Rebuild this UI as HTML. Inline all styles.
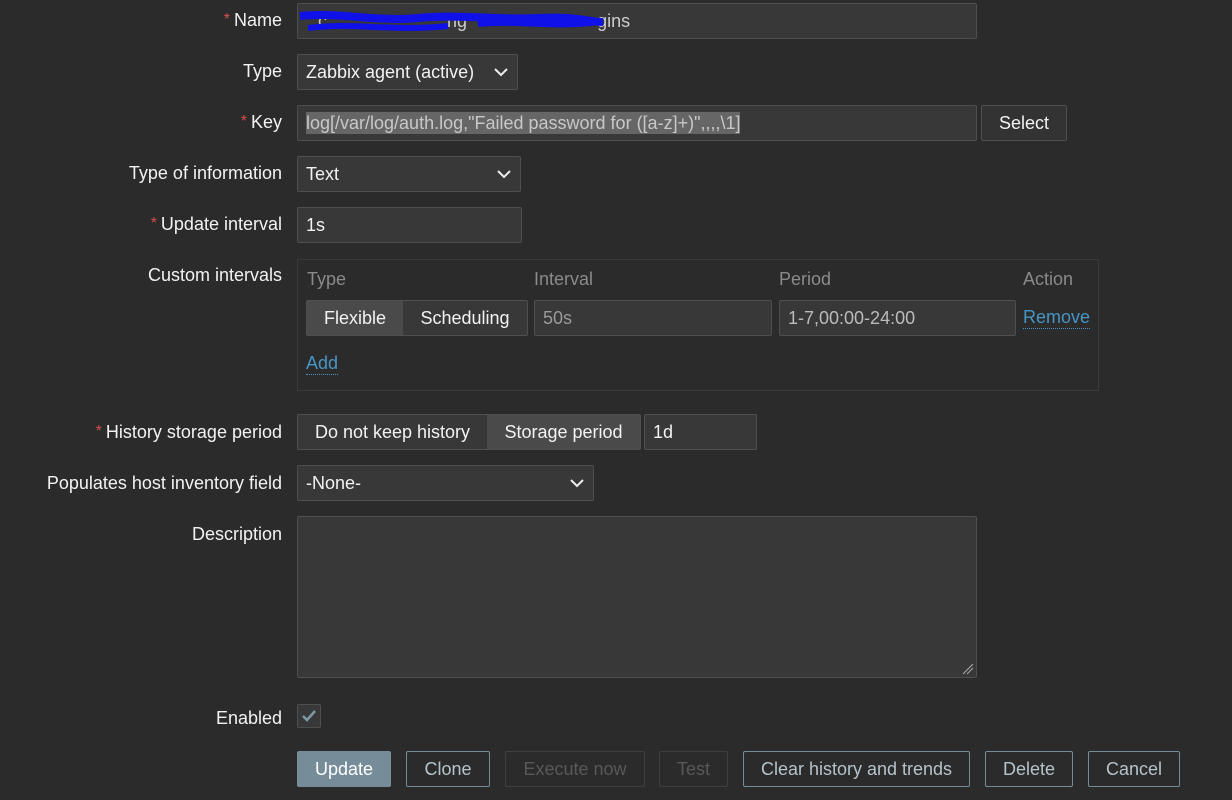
<!DOCTYPE html>
<html><head><style>
*{box-sizing:border-box;margin:0;padding:0}
body{width:1232px;height:800px;background:#2b2b2b;font-family:"Liberation Sans",Arial,sans-serif;font-size:18px;color:#f2f2f2;position:relative;overflow:hidden}
.a{position:absolute}
.lbl{position:absolute;right:950px;white-space:nowrap;color:#f2f2f2}
.req{color:#d64e4e;font-size:16px;position:relative;top:-2px;margin-right:4px}
.in{position:absolute;background:#383838;border:1px solid #4f4f4f;border-radius:2px;padding-left:8px;line-height:34px;height:36px;white-space:nowrap;color:#f2f2f2}
.chev{position:absolute;right:8px;top:11px;width:16px;height:12px}
.btn{position:absolute;border:1px solid #768d99;border-radius:2px;height:36px;line-height:34px;text-align:center;color:#b5c3cb}
.dis{border-color:#3f3f3f;color:#585858}
.lnk{color:#4796c4;border-bottom:1px dotted #4796c4}
.hd{color:#8a8a8a}
</style></head><body>
<div class="lbl" style="top:10px"><span class="req">*</span>Name</div>
<div class="in" style="left:297px;top:3px;width:680px;height:36px">
<span class="a" style="left:20px;top:0;color:#ccc">c &nbsp;&nbsp;&nbsp;&nbsp;&nbsp;&nbsp;&nbsp;&nbsp;&nbsp;&nbsp;&nbsp;&nbsp;&nbsp;&nbsp;&nbsp;&nbsp;&nbsp;&nbsp;&nbsp;&nbsp;&nbsp;&nbsp;&nbsp;ng &nbsp;&nbsp;&nbsp;&nbsp;&nbsp;&nbsp;&nbsp;&nbsp;&nbsp;&nbsp;&nbsp;&nbsp;&nbsp;&nbsp;&nbsp;&nbsp;&nbsp;&nbsp;&nbsp;&nbsp;&nbsp;&nbsp;&nbsp;&nbsp;&nbsp;gins</span>
<svg class="a" style="left:0;top:4px" width="320" height="30"><path d="M2 8 C40 4 80 14 120 10 S200 12 240 10 S290 14 305 14" stroke="#1010e8" stroke-width="8" fill="none"/><path d="M10 20 C60 14 90 24 150 18 M180 16 C220 12 260 20 300 14" stroke="#1010e8" stroke-width="6" fill="none"/></svg>
</div>

<div class="lbl" style="top:61px">Type</div>
<div class="in" style="left:297px;top:54px;width:221px">Zabbix agent (active)<svg class="chev" viewBox="0 0 16 12"><path d="M2 3 L8 9 L14 3" stroke="#eee" stroke-width="2" fill="none"/></svg></div>

<div class="lbl" style="top:112px"><span class="req">*</span>Key</div>
<div class="in" style="left:297px;top:105px;width:680px"><span style="background:#666;color:#c8c8c8;line-height:22px;display:inline-block">log[/var/log/auth.log,"Failed password for ([a-z]+)",,,,\1]</span></div>
<div class="in" style="left:981px;top:105px;width:86px;padding:0;text-align:center;background:#333">Select</div>

<div class="lbl" style="top:163px">Type of information</div>
<div class="in" style="left:297px;top:156px;width:224px">Text<svg class="chev" viewBox="0 0 16 12"><path d="M2 3 L8 9 L14 3" stroke="#eee" stroke-width="2" fill="none"/></svg></div>

<div class="lbl" style="top:214px"><span class="req">*</span>Update interval</div>
<div class="in" style="left:297px;top:207px;width:225px">1s</div>

<div class="lbl" style="top:265px">Custom intervals</div>
<div class="a" style="left:297px;top:259px;width:802px;height:132px;border:1px solid #3a3a3a"></div>
<div class="a hd" style="left:307px;top:269px">Type</div>
<div class="a hd" style="left:534px;top:269px">Interval</div>
<div class="a hd" style="left:779px;top:269px">Period</div>
<div class="a hd" style="left:1023px;top:269px">Action</div>
<div class="in" style="left:306px;top:300px;width:222px;padding:0"></div>
<div class="a" style="left:307px;top:301px;width:96px;height:34px;background:#4a4a4a;line-height:34px;text-align:center">Flexible</div>
<div class="a" style="left:403px;top:301px;width:124px;height:34px;line-height:34px;text-align:center">Scheduling</div>
<div class="in" style="left:534px;top:300px;width:238px;color:#9a9a9a">50s</div>
<div class="in" style="left:779px;top:300px;width:237px;color:#bbb">1-7,00:00-24:00</div>
<div class="a lnk" style="left:1023px;top:307px">Remove</div>
<div class="a lnk" style="left:306px;top:353px">Add</div>

<div class="lbl" style="top:422px"><span class="req">*</span>History storage period</div>
<div class="in" style="left:297px;top:414px;width:344px;padding:0"></div>
<div class="a" style="left:298px;top:415px;width:189px;height:34px;line-height:34px;text-align:center">Do not keep history</div>
<div class="a" style="left:487px;top:415px;width:153px;height:34px;line-height:34px;text-align:center;background:#4a4a4a">Storage period</div>
<div class="in" style="left:644px;top:414px;width:113px">1d</div>

<div class="lbl" style="top:473px">Populates host inventory field</div>
<div class="in" style="left:297px;top:465px;width:297px">-None-<svg class="chev" viewBox="0 0 16 12"><path d="M2 3 L8 9 L14 3" stroke="#eee" stroke-width="2" fill="none"/></svg></div>

<div class="lbl" style="top:524px">Description</div>
<div class="in" style="left:297px;top:516px;width:680px;height:162px"><svg class="a" style="right:2px;bottom:2px" width="12" height="12"><path d="M11 1 L1 11 M11 5 L5 11" stroke="#aaa" stroke-width="1"/></svg></div>

<div class="lbl" style="top:708px">Enabled</div>
<div class="a" style="left:297px;top:704px;width:24px;height:24px;border:1px solid #4f4f4f;background:#383838;border-radius:2px"><svg width="22" height="22"><path d="M5 11 L9 15 L17 6" stroke="#7f97a6" stroke-width="2.5" fill="none"/></svg></div>

<div class="btn" style="left:297px;top:751px;width:94px;background:#768d99;color:#fff">Update</div>
<div class="btn" style="left:406px;top:751px;width:84px">Clone</div>
<div class="btn dis" style="left:505px;top:751px;width:140px">Execute now</div>
<div class="btn dis" style="left:659px;top:751px;width:69px">Test</div>
<div class="btn" style="left:743px;top:751px;width:227px">Clear history and trends</div>
<div class="btn" style="left:985px;top:751px;width:88px">Delete</div>
<div class="btn" style="left:1088px;top:751px;width:92px">Cancel</div>
</body></html>
